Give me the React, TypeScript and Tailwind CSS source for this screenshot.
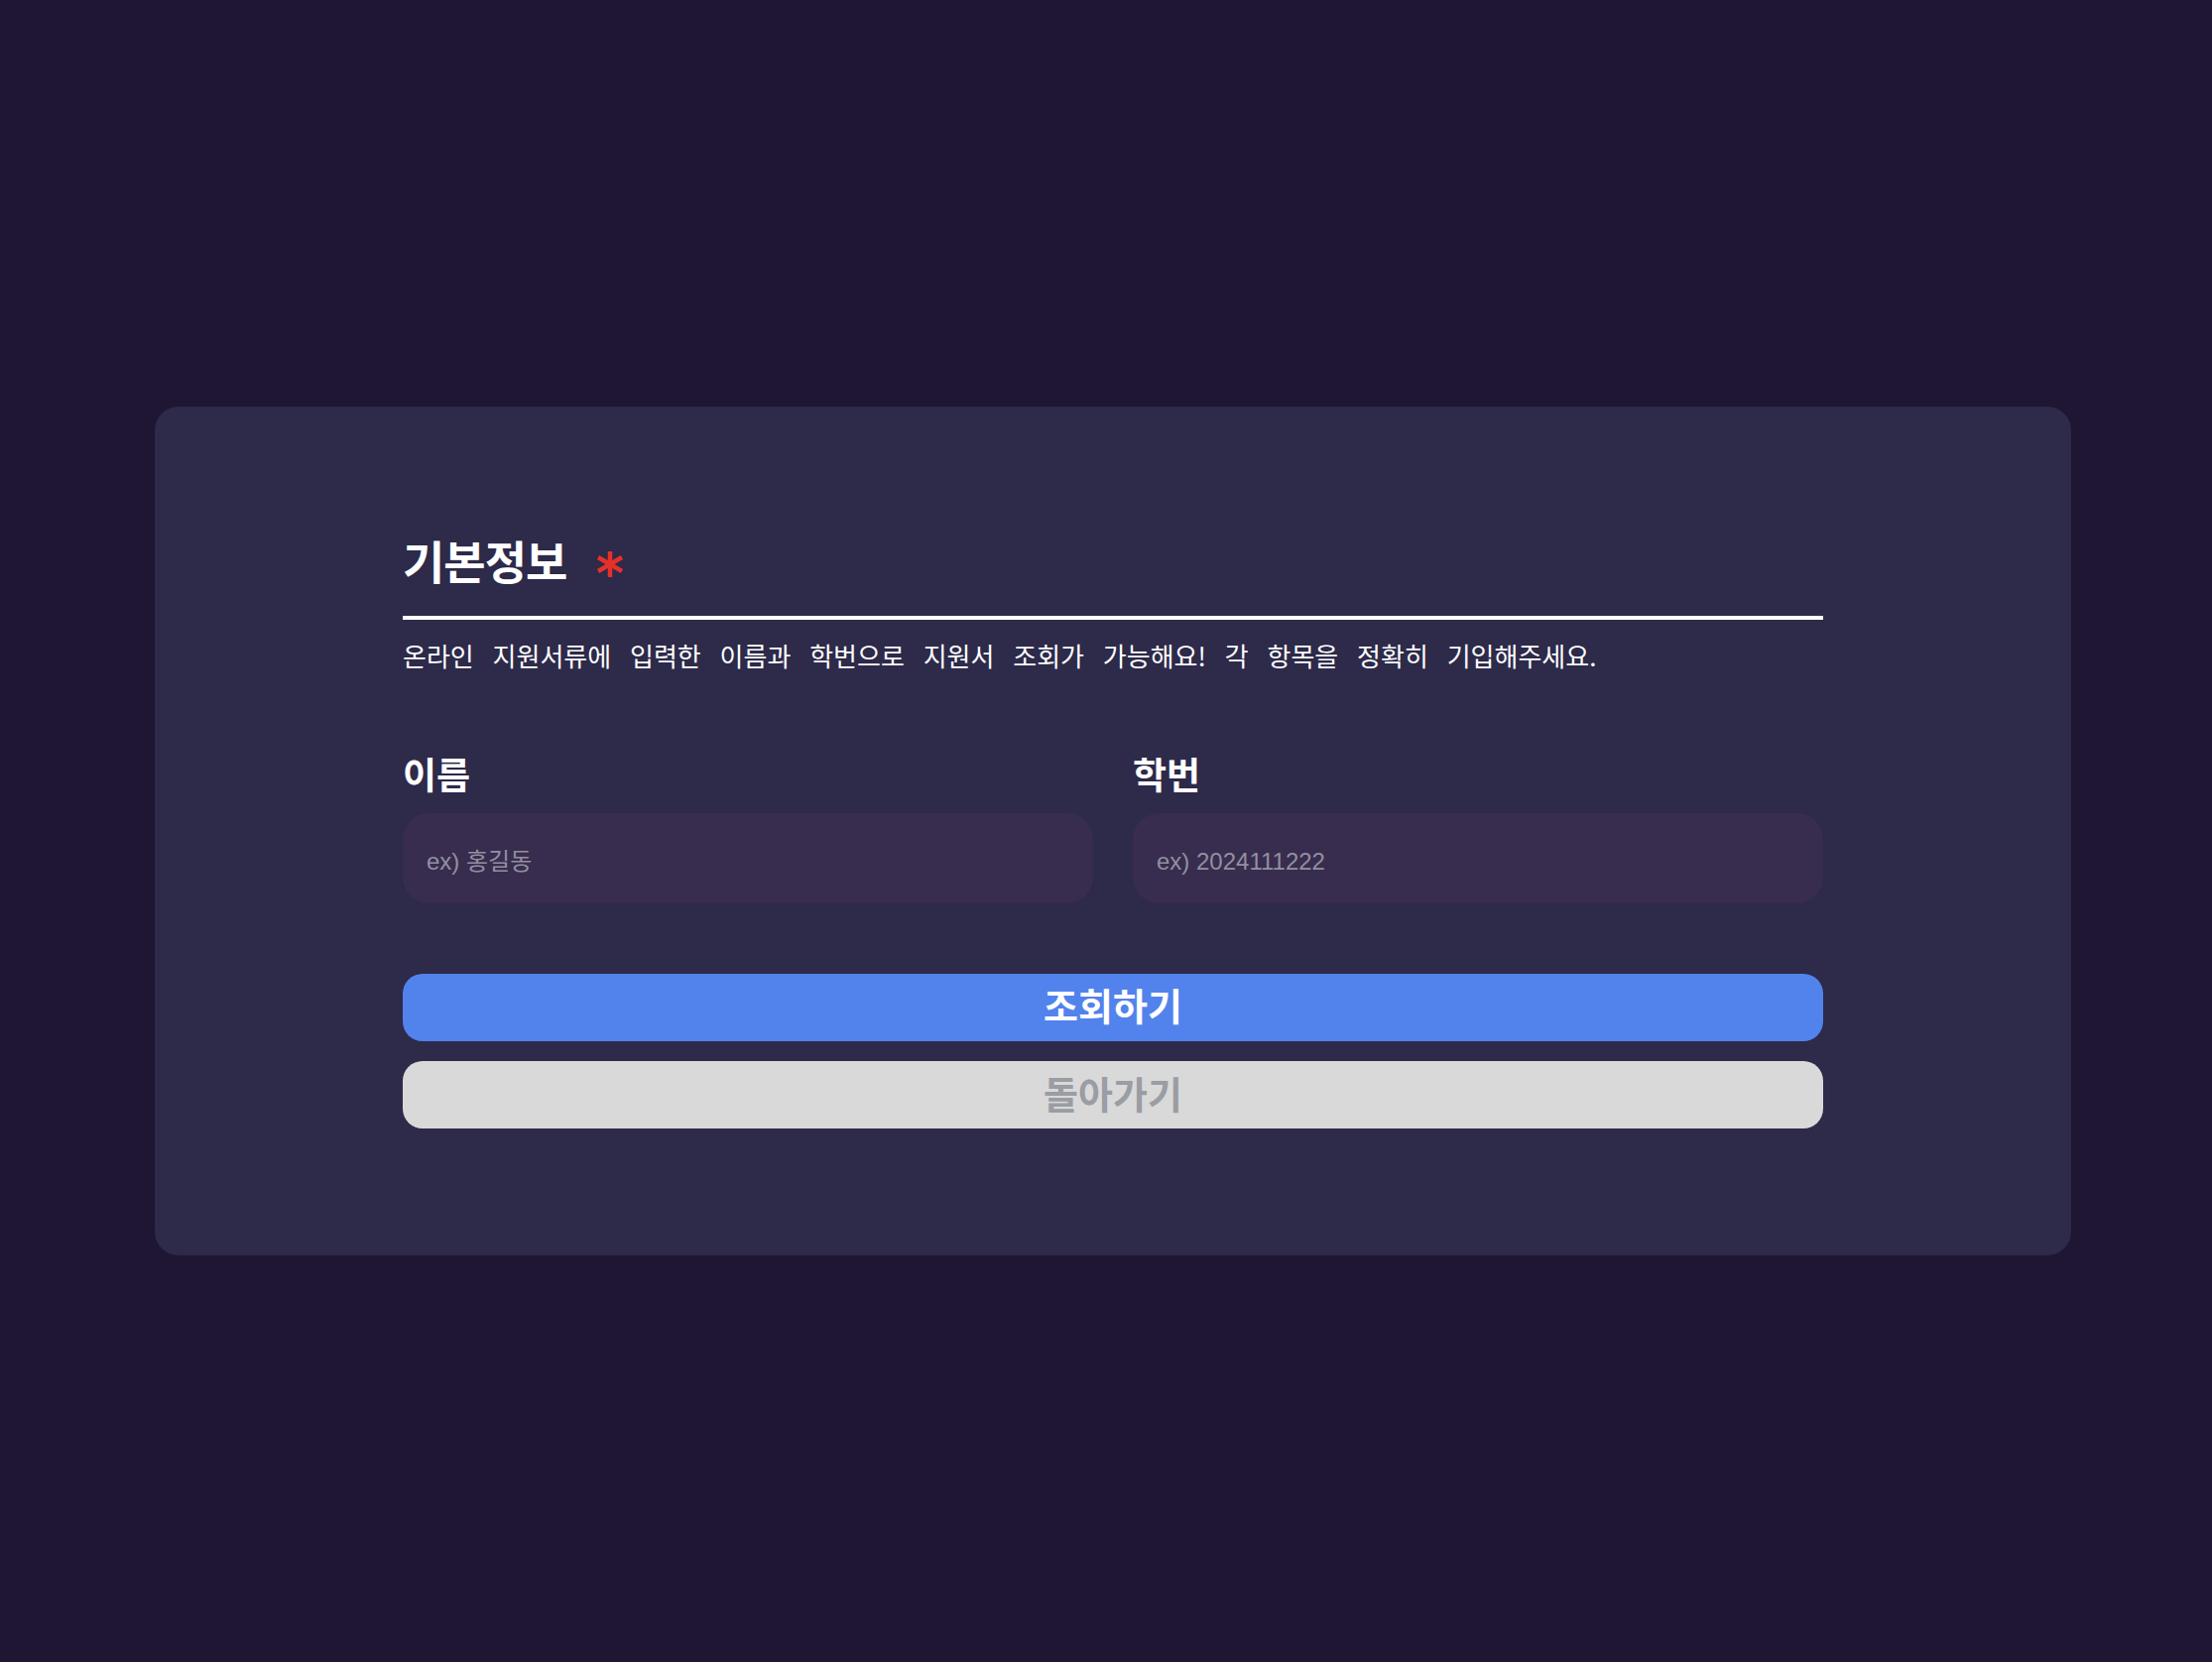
import React, { useState } from "react";

const kr = "font-['Noto_Sans_CJK_KR','Noto_Sans',sans-serif]";

function Asterisk() {
  return (
    <svg width="28" height="26" viewBox="0 0 28 26" className="shrink-0">
      <g stroke="#e5312a" strokeWidth="4.5" strokeLinecap="butt">
        <line x1="14" y1="0" x2="14" y2="26" />
        <line x1="2" y1="6" x2="26" y2="20" />
        <line x1="2" y1="20" x2="26" y2="6" />
      </g>
    </svg>
  );
}

export default function App() {
  const [name, setName] = useState("");
  const [studentId, setStudentId] = useState("");

  return (
    <div className={`min-h-screen bg-[#1e1632] flex items-center pl-[156px] pr-[142px] ${kr}`}>
      <div className="w-full bg-[#2d2a4a] rounded-[24px] px-[250px] pt-[124px] pb-[128px]">
        {/* 제목 */}
        <div className="flex items-center">
          <h1 className="text-white text-[46px] font-bold leading-[60px] tracking-[-1px]">기본정보</h1>
          <div className="ml-[30px] mt-[10px]">
            <Asterisk />
          </div>
        </div>
        <div className="h-[4px] bg-white mt-[27px]" />
        <p className="text-white text-[26px] leading-[36px] mt-[18px] [word-spacing:13px]">
          온라인 지원서류에 입력한 이름과 학번으로 지원서 조회가 가능해요! 각 항목을 정확히 기입해주세요.
        </p>

        {/* 입력 */}
        <div className="grid grid-cols-2 gap-[40px] mt-[78px]">
          <div>
            <label className="block text-white text-[37px] font-bold leading-[46px]">이름</label>
            <input
              value={name}
              onChange={(e) => setName(e.target.value)}
              placeholder="ex) 홍길동"
              className="mt-[17px] w-full h-[91px] rounded-[26px] bg-[#382d4e] px-[24px] pt-[6px] text-[24px] text-white placeholder:text-[#938fa1] outline-none font-['Liberation_Sans','Noto_Sans_CJK_KR',sans-serif]"
            />
          </div>
          <div>
            <label className="block text-white text-[37px] font-bold leading-[46px]">학번</label>
            <input
              value={studentId}
              onChange={(e) => setStudentId(e.target.value)}
              placeholder="ex) 2024111222"
              className="mt-[17px] w-full h-[91px] rounded-[26px] bg-[#382d4e] px-[24px] pt-[6px] text-[24px] text-white placeholder:text-[#938fa1] outline-none font-['Liberation_Sans','Noto_Sans_CJK_KR',sans-serif]"
            />
          </div>
        </div>

        {/* 버튼 */}
        <div className="flex flex-col gap-[20px] mt-[71px]">
          <button className="h-[68px] w-full rounded-[20px] bg-[#5283ec] text-white text-[38px] font-bold leading-none pb-[6px]">
            조회하기
          </button>
          <button className="h-[68px] w-full rounded-[20px] bg-[#d9d9d9] text-[#9a9da3] text-[38px] font-bold leading-none pb-[4px]">
            돌아가기
          </button>
        </div>
      </div>
    </div>
  );
}
